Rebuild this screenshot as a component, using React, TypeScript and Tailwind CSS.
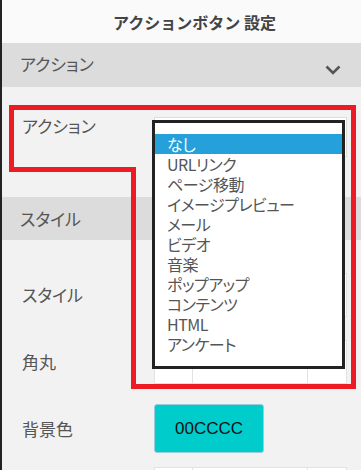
import React from "react";

const options = [
  "なし",
  "URLリンク",
  "ページ移動",
  "イメージプレビュー",
  "メール",
  "ビデオ",
  "音楽",
  "ポップアップ",
  "コンテンツ",
  "HTML",
  "アンケート",
];

const jp = "font-['Noto_Sans_CJK_JP','Noto_Sans',sans-serif]";

const Segmented: React.FC = () => (
  <div className="flex h-[44px] w-[193px] border border-[#e2e2e2] bg-white">
    <div className="w-[38px] border-r border-[#e2e2e2]" />
    <div className="flex-1 border-r border-[#e2e2e2]" />
    <div className="w-[38px]" />
  </div>
);

const Row: React.FC<{ label: string; className?: string; children?: React.ReactNode }> = ({
  label,
  className,
  children,
}) => (
  <div className={`flex items-center ${className ?? ""}`}>
    <div className="w-[152px] pl-5 text-[17px] text-[#555] [font-feature-settings:'palt']">{label}</div>
    {children}
  </div>
);

export default function App() {
  return (
    <div className={`relative h-[470px] w-[361px] overflow-hidden border-l-2 border-[#222] bg-[#f2f2f2] ${jp}`}>
      <div className="flex h-[43px] items-center justify-center bg-[#fafafa] pl-[26px] text-[16px] font-bold text-[#444]">
        アクションボタン 設定
      </div>

      <div className="flex h-[44px] items-center justify-between bg-[#dcdcdc] pb-[2px] pl-[18px] pr-[20px]">
        <span className="text-[17px] text-[#555] [font-feature-settings:'palt']">アクション</span>
        <svg width="16" height="10" viewBox="0 0 16 10" className="mt-[12px]">
          <path d="M1.5 1.5 L8 8 L14.5 1.5" fill="none" stroke="#555" strokeWidth="2.6" />
        </svg>
      </div>

      <Row label="アクション" className="h-[110px] items-start pt-[26px]">
        <div className="mt-[4px] h-[40px] w-[193px] border border-[#ddd] bg-white" />
      </Row>

      <div className="flex h-[43px] items-center bg-[#dcdcdc] pl-[18px] text-[17px] text-[#555] [font-feature-settings:'palt']">
        スタイル
      </div>

      <Row label="スタイル" className="mt-[10px] h-[90px]">
        <Segmented />
      </Row>
      <Row label="角丸" className="h-[44px]">
        <Segmented />
      </Row>
      <Row label="背景色" className="mt-[20px] h-[49px]">
        <div className="flex h-[49px] w-[110px] items-center justify-center rounded-[3px] border border-[#9cd] bg-[#00cccc] font-['Liberation_Sans',sans-serif] text-[17px] text-[#111]">
          00CCCC
        </div>
      </Row>
      <Row label="" className="mt-[14px] h-[44px]">
        <Segmented />
      </Row>

      {/* open option list */}
      <div className="absolute left-[150px] top-[120px] h-[249px] w-[193px] border-[3px] border-[#222] bg-white pt-[11px]">
        {options.map((o, i) => (
          <div
            key={o}
            className={`h-[20px] pl-[12px] text-[16px] leading-[20px] tracking-[-0.5px] [font-feature-settings:'palt'] ${
              i === 0 ? "bg-[#26a0da] text-white" : "text-[#555]"
            }`}
          >
            {o}
          </div>
        ))}
      </div>

      {/* red annotation outline */}
      <svg className="pointer-events-none absolute -left-[2px] top-0" width="361" height="470">
        <path
          d="M11.5 107.5 H353.5 V386.5 H133.5 V169.5 H11.5 Z"
          fill="none"
          stroke="#ed1c24"
          strokeWidth="5"
        />
      </svg>
    </div>
  );
}
